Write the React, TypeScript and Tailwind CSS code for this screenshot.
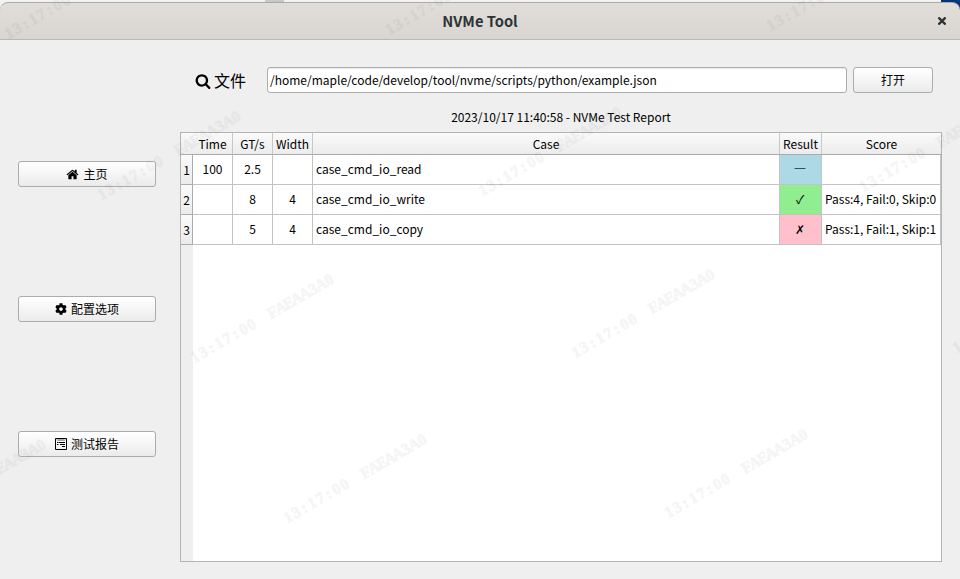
import type { ReactNode } from "react";
import { FaCog } from "react-icons/fa";

const ROWS = [
  { time: "100", speed: "2.5", width: "", name: "case_cmd_io_read", mark: "—", color: "bg-[#add8e6]", score: "" },
  { time: "", speed: "8", width: "4", name: "case_cmd_io_write", mark: "✓", color: "bg-[#90ee90]", score: "Pass:4, Fail:0, Skip:0" },
  { time: "", speed: "5", width: "4", name: "case_cmd_io_copy", mark: "✗", color: "bg-[#ffc0cb]", score: "Pass:1, Fail:1, Skip:1" },
];

const COLUMNS = "grid grid-cols-[12px_40px_40px_40px_467px_42px_119px]";

const STAMPS = [
  [9, 39], [390, 35], [771, 31],
  [102, 200], [483, 196], [864, 192],
  [195, 363], [576, 358], [957, 353],
  [-93, 528], [288, 523], [669, 518],
];

const STAMP_TEXT = "13:17:00  FAEAA3A0";
const STAMP_X = Array.from(STAMP_TEXT, (_, i) => (3 + i * 9.3 - (i > 8 ? 3.4 : 0)).toFixed(2)).join(" ");

function Watermark() {
  return (
    <svg className="pointer-events-none absolute inset-0" width="960" height="579" viewBox="0 0 960 579">
      {STAMPS.map(([x, y]) => (
        <text
          key={x + "-" + y}
          x={STAMP_X}
          transform={`translate(${x} ${y}) rotate(-30)`}
          textAnchor="middle"
          fontFamily="'Liberation Serif', serif"
          fontWeight="700"
          fontSize="16"
          xmlSpace="preserve"
          fill="#000"
          stroke="#000"
          strokeWidth="0.7"
          opacity="0.035"
        >
          {STAMP_TEXT}
        </text>
      ))}
    </svg>
  );
}

function SearchIcon() {
  return (
    <svg className="mt-[2px]" width="16" height="16" viewBox="0 0 1792 1792" fill="#000">
      <path d="M1216 832q0-185-131.5-316.5t-316.5-131.5-316.5 131.5-131.5 316.5 131.5 316.5 316.5 131.5 316.5-131.5 131.5-316.5zm512 832q0 52-38 90t-90 38q-54 0-90-38l-343-342q-179 124-399 124-143 0-273.5-55.5t-225-150-150-225-55.5-273.5 55.5-273.5 150-225 225-150 273.5-55.5 273.5 55.5 225 150 150 225 55.5 273.5q0 220-124 399l343 343q37 37 37 90z" />
    </svg>
  );
}

function HomeIcon() {
  return (
    <svg width="13" height="13" viewBox="0 0 1792 1792" fill="#000">
      <path d="M1472 992v480q0 26-19 45t-45 19h-384v-384h-256v384h-384q-26 0-45-19t-19-45v-480q0-1 .5-3t.5-3l575-474 575 474q1 2 1 6zm223-69l-62 74q-8 9-21 11h-3q-13 0-21-7l-692-577-692 577q-12 8-24 7-13-2-21-11l-62-74q-8-10-7-23.5t11-21.5l719-599q32-26 76-26t76 26l244 204v-195q0-14 9-23t23-9h192q14 0 23 9t9 23v408l219 182q10 8 11 21.5t-7 23.5z" />
    </svg>
  );
}

function ReportIcon() {
  return (
    <svg width="12" height="12" viewBox="0 0 12 12" fill="none" stroke="#000">
      <path d="M.5.5h11v11H.5z" />
      <path d="M2 1.5l1 1 1-1 1 1 1-1 1 1 1-1 1 1 1-1" strokeWidth=".7" />
      <path d="M2 4.5h1.5M4 4.5h6M2 6.5h1.5M5 6.5h5M7 8.5h3" />
    </svg>
  );
}

function Button({ children, className }: { children: ReactNode; className: string }) {
  return (
    <button
      className={`flex h-[26px] items-center justify-center gap-1 rounded-[3px] border border-[#acacac] bg-linear-to-b from-white to-[#ebebeb] text-[12px] leading-none text-black ${className}`}
    >
      {children}
    </button>
  );
}

function HeaderCell({ children, last }: { children?: ReactNode; last?: boolean }) {
  return (
    <div className={`flex items-center justify-center ${last ? "" : "border-r border-[#c8c8c8]"}`}>
      {children}
    </div>
  );
}

const CELL = "flex items-center border-r border-b border-[#c3c3c3] pb-px";

export default function App() {
  return (
    <div className="relative flex h-[579px] w-[960px] flex-col overflow-hidden bg-[#efefef] font-['Noto_Sans_CJK_SC',sans-serif] text-[12px] text-black">
      <div className="flex h-[40px] shrink-0 flex-col bg-[linear-gradient(to_right,#f3f3f3_265px,#c9c9c9_265px,#c9c9c9_284px,#f3f3f3_284px,#f3f3f3_941px,#003580_941px)]">
        <header className="mt-[2px] grid h-[38px] grid-cols-[1fr_auto_1fr] items-center rounded-t-[8px] border-t border-b border-t-[#a9aaa8] border-b-[#bdb9b1] bg-linear-to-b from-[#e1deda] to-[#d9d5d0]">
          <span />
          <h1 className="text-[14.7px] font-bold text-[#2e3436]">NVMe Tool</h1>
          <svg className="mr-[14px] justify-self-end" width="8" height="8" viewBox="0 0 8 8">
            <path d="M.4.4l7.2 7.2M7.6.4L.4 7.6" stroke="#2e3436" strokeWidth="2.3" />
          </svg>
        </header>
      </div>

      <div className="flex flex-1">
        <nav className="flex w-[180px] flex-col gap-[109px] pt-[121px] pl-[18px]">
          <Button className="w-[138px]"><HomeIcon />主页</Button>
          <Button className="w-[138px]"><FaCog size={12} />配置选项</Button>
          <Button className="w-[138px]"><ReportIcon />测试报告</Button>
        </nav>

        <main className="flex w-[762px] flex-col">
          <div className="mt-[27px] flex h-[26px] items-center">
            <label className="flex w-[87px] items-center gap-[3px] pl-[15px] text-[16px] leading-none text-black">
              <SearchIcon />
              文件
            </label>
            <div className="flex h-[26px] w-[580px] items-center rounded-[3px] border border-[#acacac] bg-white pl-[2px] shadow-[inset_0_1px_0_#ececec]">
              /home/maple/code/develop/tool/nvme/scripts/python/example.json
            </div>
            <Button className="ml-[6px] w-[80px]">打开</Button>
          </div>
          <p className="mt-[14px] h-[20px] text-center text-[12px] leading-[20px]">2023/10/17 11:40:58 - NVMe Test Report</p>

          <section className="mt-[5px] flex h-[430px] flex-col border border-[#b4b4b4] bg-white">
            <div className={`h-[22px] border-b border-[#ababab] bg-linear-to-b from-[#fafafa] to-[#ececec] ${COLUMNS}`}>
              <HeaderCell last />
              <HeaderCell>Time</HeaderCell>
              <HeaderCell>GT/s</HeaderCell>
              <HeaderCell>Width</HeaderCell>
              <HeaderCell>Case</HeaderCell>
              <HeaderCell>Result</HeaderCell>
              <HeaderCell last>Score</HeaderCell>
            </div>
            {ROWS.map((row, i) => (
              <div key={row.name} className={`h-[30px] ${COLUMNS}`}>
                <div className="flex items-center justify-center border-r border-b border-[#acacac] bg-linear-to-b from-[#fafafa] to-[#ececec] pt-px">{i + 1}</div>
                <div className={`${CELL} justify-center`}>{row.time}</div>
                <div className={`${CELL} justify-center`}>{row.speed}</div>
                <div className={`${CELL} justify-center`}>{row.width}</div>
                <div className={`${CELL} pl-[3px]`}>{row.name}</div>
                <div className={`${CELL} justify-center pr-px ${row.color}`}>
                  <span className={row.mark === "—" ? "pb-[3px] font-['DejaVu_Sans'] text-[12px] leading-none text-[#3c4c52]" : ""}>{row.mark}</span>
                </div>
                <div className={`${CELL} pl-[3px] whitespace-nowrap`}>{row.score}</div>
              </div>
            ))}
            <div className="w-[12px] flex-1 bg-[#efefef]" />
          </section>
        </main>
      </div>
      <Watermark />
    </div>
  );
}
